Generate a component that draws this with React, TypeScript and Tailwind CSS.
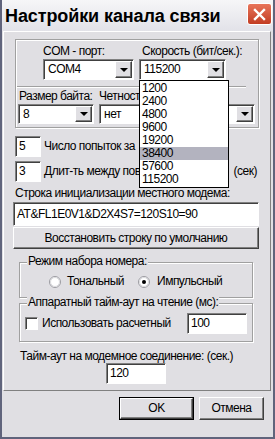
import React from "react";

const sunken =
  "bg-white border border-t-[#808080] border-l-[#808080] border-r-white border-b-white shadow-[inset_1px_1px_0_#404040]";
const raised =
  "bg-[#e0dfe3] border border-t-white border-l-white border-r-[#404040] border-b-[#404040] shadow-[inset_-1px_-1px_0_#808080]";
const etched = "border border-[#a0a0a0] shadow-[inset_1px_1px_0_#fff,1px_1px_0_#fff]";

function Arrow() {
  return (
    <div className={`${raised} w-[17px] h-full flex items-center justify-center`}>
      <div className="w-0 h-0 border-x-[4px] border-x-transparent border-t-[4px] border-t-black" />
    </div>
  );
}

function Combo({ value, className }: { value: string; className: string }) {
  return (
    <div className={`${sunken} ${className} flex p-[1px]`}>
      <div className="flex-1 pl-[3px] flex items-center">{value}</div>
      <Arrow />
    </div>
  );
}

function Edit({ value, className }: { value: string; className: string }) {
  return <div className={`${sunken} ${className} flex items-center pl-[3px] whitespace-nowrap`}>{value}</div>;
}

function Radio({ checked }: { checked?: boolean }) {
  return (
    <svg width="12" height="12" viewBox="0 0 12 12">
      <circle cx="6" cy="6" r="5.5" fill="#fff" stroke="#9a9aa0" />
      <circle cx="6" cy="6" r="4.5" fill="#fff" stroke="#d8d8dc" />
      {checked && <circle cx="6" cy="6" r="2" fill="#000" />}
    </svg>
  );
}

function Group({ title, className, children }: { title: string; className: string; children: React.ReactNode }) {
  return (
    <div className={`${etched} ${className} relative`}>
      <span className="absolute -top-[8px] left-[7px] px-[1px] bg-[#e0dfe3] leading-[13px] whitespace-nowrap">{title}</span>
      {children}
    </div>
  );
}

const speeds = ["1200", "2400", "4800", "9600", "19200", "38400", "57600", "115200"];

export default function App() {
  return (
    <div className="relative w-[275px] h-[439px] overflow-hidden bg-[#e0dfe3] text-black text-[12px] tracking-[-0.5px] leading-[13px] font-['Liberation_Sans',sans-serif] whitespace-nowrap border-x-2 border-b-2 border-[#60647c] flex flex-col">
      {/* заголовок */}
      <div className="h-[31px] shrink-0 flex items-center bg-gradient-to-b from-[#f6f6f8] to-[#e2e2e8] pl-[3px] pr-[1px]">
        <span className="flex-1 text-[18px] leading-[20px] tracking-[-0.1px] font-bold mt-[1px]">Настройки канала связи</span>
        <div className="w-[25px] h-[22px] mb-[3px] rounded-[3px] border border-white bg-gradient-to-b from-[#e8745a] to-[#c23c22] flex items-center justify-center">
          <svg width="13" height="13" viewBox="0 0 13 13">
            <path d="M2 2L11 11M11 2L2 11" stroke="#fff" strokeWidth="2.4" strokeLinecap="square" />
          </svg>
        </div>
      </div>

      {/* панель */}
      <div className="ml-[1px] w-[268px] h-[360px] shrink-0 border border-t-white border-l-white border-r-[#808080] border-b-[#808080] flex flex-col">
        <div className={`${etched} mt-[7px] ml-[11px] w-[244px] h-[89px] flex flex-col`}>
          <div className="flex mt-[5px] h-[13px]">
            <span className="ml-[27px] w-[99px]">COM - порт:</span>
            <span>Скорость (бит/сек.):</span>
          </div>
          <div className="flex mt-[1px]">
            <Combo value="COM4" className="ml-[27px] w-[91px] h-[21px]" />
            <Combo value="115200" className="ml-[5px] w-[87px] h-[21px]" />
          </div>
          <div className="mt-[6px] ml-[1px] w-[229px] h-[2px] border-t border-t-[#a0a0a0] border-b border-b-white" />
          <div className="flex mt-[2px] h-[13px]">
            <span className="ml-[3px] w-[80px]">Размер байта:</span>
            <span>Четност</span>
          </div>
          <div className="flex mt-[1px]">
            <Combo value="8" className="ml-[2px] w-[76px] h-[20px]" />
            <Combo value="нет" className="ml-[5px] w-[156px] h-[20px]" />
          </div>
        </div>

        <div className="flex items-center mt-[8px]">
          <Edit value="5" className="ml-[11px] w-[26px] h-[21px]" />
          <span className="ml-[3px]">Число попыток за</span>
        </div>
        <div className="flex items-center mt-[4px]">
          <Edit value="3" className="ml-[11px] w-[26px] h-[21px]" />
          <span className="ml-[3px]">Длит-ть между пов</span>
          <span className="ml-auto mr-[13px]">(сек)</span>
        </div>

        <div className="mt-[5px] ml-[11px] h-[13px]">Строка инициализации местного модема:</div>
        <Edit value="AT&FL1E0V1&D2X4S7=120S10=90" className="mt-[2px] ml-[9px] w-[246px] h-[24px]" />
        <div className={`${raised} mt-[1px] ml-[9px] w-[246px] h-[22px] flex items-center justify-center`}>
          Восстановить строку по умолчанию
        </div>

        <Group title="Режим набора номера:" className="mt-[13px] ml-[15px] w-[234px] h-[36px]">
          <div className="flex items-center mt-[12px] ml-[29px]">
            <div className="w-[89px] flex items-center gap-[6px]">
              <Radio />
              <span>Тональный</span>
            </div>
            <div className="flex items-center gap-[7px]">
              <Radio checked />
              <span>Импульсный</span>
            </div>
          </div>
        </Group>

        <Group title="Аппаратный тайм-аут на чтение (мс):" className="mt-[5px] ml-[15px] w-[234px] h-[39px]">
          <div className="flex items-center mt-[9px] h-[21px]">
            <div className={`${sunken} ml-[5px] w-[13px] h-[13px]`} />
            <span className="ml-[4px]">Использовать расчетный</span>
            <Edit value="100" className="ml-auto mr-[5px] w-[60px] h-[21px]" />
          </div>
        </Group>

        <div className="mt-[8px] ml-[16px] h-[13px]">Тайм-аут на модемное соединение: (сек.)</div>
        <Edit value="120" className="ml-[102px] w-[60px] h-[21px]" />
      </div>

      {/* кнопки */}
      <div className="flex mt-[6px]">
        <div className="ml-[117px] w-[75px] h-[23px] border border-black">
          <div className={`${raised} w-full h-full flex items-center justify-center`}>OK</div>
        </div>
        <div className={`${raised} ml-[5px] w-[65px] h-[23px] flex items-center justify-center`}>Отмена</div>
      </div>

      {/* выпадающий список скорости */}
      <div className="absolute left-[137px] top-[80px] w-[90px] bg-white border border-black py-[1px]">
        {speeds.map((s) => (
          <div key={s} className={`h-[13px] pl-[2px] ${s === "38400" ? "bg-[#b3b3bf]" : ""}`}>
            {s}
          </div>
        ))}
      </div>
    </div>
  );
}
